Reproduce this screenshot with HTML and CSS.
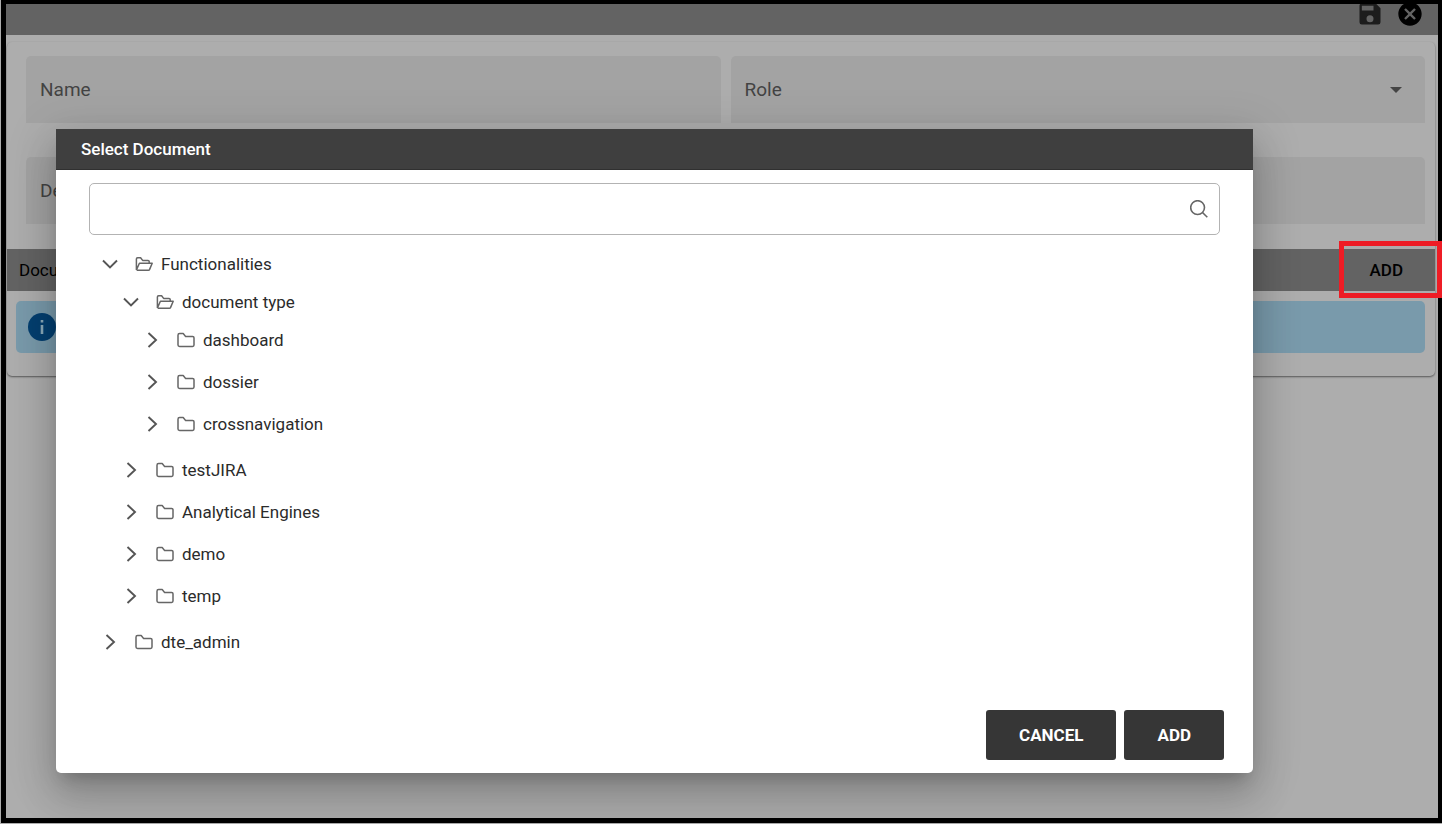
FILE: index.html
```html
<!DOCTYPE html>
<html lang="en">
<head>
<meta charset="utf-8">
<title>Select Document</title>
<link rel="stylesheet" href="styles.css">
</head>
<body>
<svg class="defs" aria-hidden="true">
  <symbol id="down" viewBox="0 0 16 16"><path d="M1 4.5 8 11.5 15 4.5"/></symbol>
  <symbol id="right" viewBox="0 0 16 16"><path d="M4.5 1 12 8 4.5 15"/></symbol>
  <symbol id="folder" viewBox="0 0 18 16"><path d="M1 3.2Q1 1.6 2.6 1.6H6.2L8.6 4.4H15.6Q17 4.4 17 5.8V13Q17 14.4 15.6 14.4H2.6Q1 14.4 1 13Z"/></symbol>
  <symbol id="open" viewBox="0 0 18 16"><path d="M1.4 14V3Q1.4 1.8 2.6 1.8H5.6L7.6 4.4H13Q14.2 4.4 14.2 5.6V7M1.4 14 4.4 7.2H17.2L14.6 13.4Q14.3 14.2 13.4 14.2H1.6"/></symbol>
</svg>
<div class="frame">
  <header class="toolbar">
    <div class="actions">
      <button class="icon-btn save" aria-label="Save"><svg viewBox="0 0 24 24"><path fill="currentColor" d="M15 9H5V5h10m-3 14a3 3 0 0 1-3-3 3 3 0 0 1 3-3 3 3 0 0 1 3 3 3 3 0 0 1-3 3m5-16H5a2 2 0 0 0-2 2v14a2 2 0 0 0 2 2h14a2 2 0 0 0 2-2V7z"/></svg></button>
      <button class="icon-btn" aria-label="Close"><svg viewBox="0 0 24 24"><path fill="currentColor" d="M12 2C6.470 2 2 6.470 2 12s4.470 10 10 10 10-4.470 10-10S17.530 2 12 2m5 13.590L15.590 17 12 13.410 8.410 17 7 15.590 10.590 12 7 8.410 8.410 7 12 10.590 15.590 7 17 8.410 13.410 12z"/></svg></button>
    </div>
  </header>
  <main class="card">
    <form class="form">
      <input class="field" type="text" placeholder="Name" aria-label="Name">
      <div class="select-wrap">
        <select class="field" aria-label="Role"><option>Role</option></select>
        <svg class="caret" viewBox="0 0 12 6"><path fill="currentColor" d="M0 0h12L6 6z"/></svg>
      </div>
      <input class="field wide" type="text" placeholder="Description" aria-label="Description">
    </form>
    <div class="subheader">
      <span class="subtitle">Documents</span>
      <div class="highlight"><button class="add-doc">ADD</button></div>
    </div>
    <div class="message">
      <svg class="info" viewBox="0 0 28 28"><circle cx="14" cy="14" r="14" fill="#043f70"/><path fill="#8aa9b9" d="M12.700 7h2.600v2.600h-2.600zM12.700 12h2.600v9h-2.600z"/></svg>
    </div>
  </main>
</div>
<section class="dialog" role="dialog" aria-labelledby="dialog-title">
  <h1 class="dialog-title" id="dialog-title">Select Document</h1>
  <div class="dialog-body">
    <div class="search">
      <input class="search-input" type="text" aria-label="Search">
      <svg class="search-icon" viewBox="0 0 18 18"><circle cx="7.600" cy="7.600" r="6.900"/><path d="M12.500 12.500 17.300 17.300"/></svg>
    </div>
    <ul class="tree">
      <li class="node">
        <div class="row"><button class="toggle" aria-label="Collapse Functionalities"><svg class="chevron"><use href="#down"/></svg></button><svg class="folder"><use href="#open"/></svg><span>Functionalities</span></div>
        <ul class="branch">
          <li class="node">
            <div class="row"><button class="toggle" aria-label="Collapse document type"><svg class="chevron"><use href="#down"/></svg></button><svg class="folder"><use href="#open"/></svg><span>document type</span></div>
            <ul class="branch">
              <li class="node"><div class="row"><button class="toggle" aria-label="Expand dashboard"><svg class="chevron"><use href="#right"/></svg></button><svg class="folder"><use href="#folder"/></svg><span>dashboard</span></div></li>
              <li class="node"><div class="row"><button class="toggle" aria-label="Expand dossier"><svg class="chevron"><use href="#right"/></svg></button><svg class="folder"><use href="#folder"/></svg><span>dossier</span></div></li>
              <li class="node"><div class="row"><button class="toggle" aria-label="Expand crossnavigation"><svg class="chevron"><use href="#right"/></svg></button><svg class="folder"><use href="#folder"/></svg><span>crossnavigation</span></div></li>
            </ul>
          </li>
          <li class="node"><div class="row"><button class="toggle" aria-label="Expand testJIRA"><svg class="chevron"><use href="#right"/></svg></button><svg class="folder"><use href="#folder"/></svg><span>testJIRA</span></div></li>
          <li class="node"><div class="row"><button class="toggle" aria-label="Expand Analytical Engines"><svg class="chevron"><use href="#right"/></svg></button><svg class="folder"><use href="#folder"/></svg><span>Analytical Engines</span></div></li>
          <li class="node"><div class="row"><button class="toggle" aria-label="Expand demo"><svg class="chevron"><use href="#right"/></svg></button><svg class="folder"><use href="#folder"/></svg><span>demo</span></div></li>
          <li class="node"><div class="row"><button class="toggle" aria-label="Expand temp"><svg class="chevron"><use href="#right"/></svg></button><svg class="folder"><use href="#folder"/></svg><span>temp</span></div></li>
        </ul>
      </li>
      <li class="node"><div class="row"><button class="toggle" aria-label="Expand dte_admin"><svg class="chevron"><use href="#right"/></svg></button><svg class="folder"><use href="#folder"/></svg><span>dte_admin</span></div></li>
    </ul>
  </div>
  <footer class="dialog-footer">
    <button class="btn">CANCEL</button>
    <button class="btn">ADD</button>
  </footer>
</section>
</body>
</html>
```
FILE: styles.css
```css
* { box-sizing: border-box; }
body {
  margin: 0;
  padding: 0 0 1px 1px;
  min-height: 100vh;
  display: flex;
  background: #adadad;
  color: #2b2b2b;
  font: 17px/20px Roboto, sans-serif;
}
button, input, select { font: inherit; border: 0; margin: 0; }
button { padding: 0; background: none; cursor: pointer; }
ul { list-style: none; margin: 0; padding: 0; }
.defs { position: absolute; width: 0; height: 0; }

.frame { flex: 1; border: solid #000; border-width: 4px 4px 5px 5px; }

.toolbar {
  height: 31px;
  padding-right: 14px;
  display: flex;
  justify-content: flex-end;
  align-items: flex-start;
  overflow: hidden;
  background: #636363;
}
.actions { display: flex; gap: 12px; margin-top: -4px; }
.icon-btn { width: 28px; height: 28px; color: #000; }
.icon-btn svg { display: block; }
.save { color: #1c1c1c; }

.card {
  margin: 7px 3px 0 1px;
  padding-bottom: 23px;
  border-radius: 5px;
  box-shadow: 0 1px 2px rgba(0, 0, 0, .5);
}
.form {
  display: grid;
  grid-template-columns: 1fr 1fr;
  gap: 34px 10px;
  padding: 14px 10px 25px 19px;
}
.field {
  width: 100%;
  height: 67px;
  padding: 0 14px;
  border-radius: 5px 5px 0 0;
  background: #a3a3a3;
  color: #434343;
  font-size: 19px;
  appearance: none;
  outline: none;
}
.field::placeholder { color: #434343; opacity: 1; }
.wide { grid-column: 1 / -1; }
.select-wrap { position: relative; }
.caret { position: absolute; right: 23px; top: 31px; width: 12px; height: 6px; color: #444; }

.subheader {
  height: 42px;
  padding-left: 12px;
  display: flex;
  justify-content: space-between;
  align-items: center;
  background: #636363;
  color: #000;
}
.highlight { position: relative; height: 100%; }
.highlight::after {
  content: "";
  position: absolute;
  inset: -8px -7px -7px 0;
  border: 5px solid #ee1c25;
  pointer-events: none;
}
.add-doc { height: 100%; padding: 0 32px 0 31px; color: #000; font-weight: 500; }
.message {
  margin: 10px 10px 0 9px;
  height: 52px;
  padding: 0 12px;
  display: flex;
  align-items: center;
  border-radius: 5px;
  background: #799aab;
}
.info { width: 28px; height: 28px; }

.dialog {
  position: absolute;
  left: 56px;
  right: 189px;
  top: 129px;
  border-radius: 0 0 5px 5px;
  background: #fff;
  box-shadow: 0 11px 15px -7px rgba(0, 0, 0, .2), 0 24px 38px 3px rgba(0, 0, 0, .14), 0 9px 46px 8px rgba(0, 0, 0, .12);
}
.dialog-title {
  margin: 0;
  padding: 11px 25px 10px;
  border-bottom: 1px solid #303030;
  background: #3f3f3f;
  color: #fff;
  font-size: 17px;
  line-height: 19px;
  font-weight: 500;
}
.dialog-body { padding: 13px 33px 0; }
.search { position: relative; }
.search-input {
  display: block;
  width: 100%;
  height: 52px;
  padding: 0 40px 0 12px;
  border: 1px solid #b3b3b3;
  border-radius: 5px;
  background: #fff;
  outline: none;
}
.search-icon {
  position: absolute;
  right: 12px;
  top: 17px;
  width: 18px;
  height: 18px;
  fill: none;
  stroke: #666;
  stroke-width: 1.6;
}
.tree { padding: 10px 0 0 5px; }
.branch { padding-left: 21px; }
.node { padding-bottom: 4px; }
.row { height: 38px; display: flex; align-items: center; }
.toggle { width: 32px; height: 34px; margin-right: 9px; display: grid; place-items: center; }
.chevron { width: 16px; height: 16px; fill: none; stroke: #555; stroke-width: 1.9; }
.folder { width: 18px; height: 16px; margin-right: 8px; fill: none; stroke: #666; stroke-width: 1.5; stroke-linejoin: round; }
.dialog-footer {
  display: flex;
  justify-content: flex-end;
  gap: 8px;
  padding: 45px 29px 13px;
}
.btn {
  height: 50px;
  padding: 0 33px;
  border-radius: 3px;
  background: #363636;
  color: #fff;
  font-weight: 700;
}
```
